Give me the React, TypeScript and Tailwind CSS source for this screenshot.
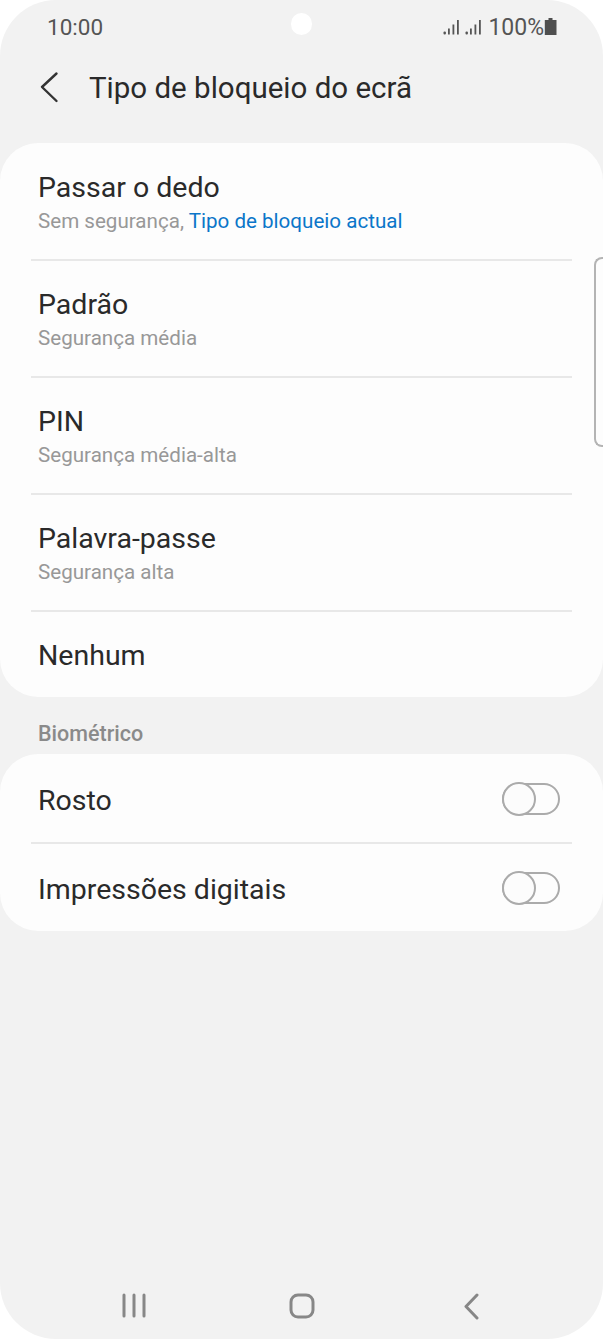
import React from "react";

function Signal() {
  return (
    <svg width="16" height="17" viewBox="0 0 16 17" fill="#555">
      <rect x="0.5" y="12.5" width="2.4" height="3" rx="1" />
      <rect x="5" y="9.5" width="1.8" height="6" />
      <rect x="9.5" y="5.5" width="1.8" height="10" />
      <rect x="14" y="1" width="1.8" height="14.5" />
    </svg>
  );
}

function Row({ title, sub, subLink, last }: { title: string; sub?: string; subLink?: string; last?: boolean }) {
  return (
    <div className={`mx-[31px] px-[7px] flex flex-col ${last ? "h-[86px] justify-center pt-[2px]" : "h-[117px] border-b-2 border-[#e8e8e8] pt-[26px]"}`}>
      <div className="text-[28.5px] leading-[36px] text-[#2a2a2a]">{title}</div>
      {sub && (
        <div className="text-[20.6px] leading-[28px] mt-[1px] text-[#989898]">
          {sub}
          {subLink && <span className="text-[#0b76c9]"> {subLink}</span>}
        </div>
      )}
    </div>
  );
}

function Toggle() {
  return (
    <div className="relative w-[58px] h-[32px] rounded-full border-2 border-[#ababab]">
      <div className="absolute left-[-2px] top-[-3px] w-[34px] h-[34px] rounded-full border-2 border-[#ababab] bg-[#fcfcfc]" />
    </div>
  );
}

function ToggleRow({ title, last }: { title: string; last?: boolean }) {
  return (
    <div className={`mx-[31px] pl-[7px] flex items-center justify-between ${last ? "h-[87px]" : "h-[90px] border-b-2 border-[#e8e8e8] pt-[2px]"}`}>
      <span className={`text-[28.5px] leading-[36px] text-[#2a2a2a] ${last ? "pt-[4px]" : "pt-[4px]"}`}>{title}</span>
      <div className="mr-[12px]">
        <Toggle />
      </div>
    </div>
  );
}

export default function App() {
  return (
    <div className="w-[603px] h-[1342px] bg-white" style={{ fontFamily: "Roboto, sans-serif" }}>
      <div className="relative w-full h-[1339px] rounded-[56px] bg-[#f2f2f2] flex flex-col overflow-hidden">
        <div className="relative h-[54px] pl-[47px] pr-[45px] pt-[1px] flex items-center justify-between text-[#555555]">
          <span className="text-[22.5px] leading-[54px] -mt-[1px]">10:00</span>
          <div className="absolute left-[291px] top-[13px] w-[21px] h-[22px] rounded-full bg-white" />
          <div className="flex items-center">
            <div className="flex items-center gap-[6px] mr-[7px]">
              <Signal />
              <Signal />
            </div>
            <span className="text-[23px] leading-[54px]">100%</span>
            <svg width="14" height="20" viewBox="0 0 14 20" fill="#4f4f4f">
              <path d="M4.5 0h4v2H12.5v15H.8V2h3.7z" />
            </svg>
          </div>
        </div>

        <div className="h-[68px] flex items-center pl-[38px] text-[#2a2a2a]">
          <svg width="24" height="34" viewBox="0 0 24 34" fill="none" stroke="#333" strokeWidth="2.4" strokeLinecap="round" strokeLinejoin="round">
            <path d="M18.5 2.5 4 16 18.5 30" />
          </svg>
          <span className="ml-[27px] text-[29.5px] leading-[40px]">Tipo de bloqueio do ecrã</span>
        </div>

        <div className="mt-[21px] bg-[#fdfdfd] rounded-[38px] h-[554px] pt-[1px]">
          <Row title="Passar o dedo" sub="Sem segurança," subLink="Tipo de bloqueio actual" />
          <Row title="Padrão" sub="Segurança média" />
          <Row title="PIN" sub="Segurança média-alta" />
          <Row title="Palavra-passe" sub="Segurança alta" />
          <Row title="Nenhum" last />
        </div>

        <div className="h-[57px] pl-[38px] pt-[24px] text-[21.5px] leading-[26px] font-medium text-[#8a8a8a]">Biométrico</div>

        <div className="bg-[#fdfdfd] rounded-[38px] h-[177px]">
          <ToggleRow title="Rosto" />
          <ToggleRow title="Impressões digitais" last />
        </div>

        <div className="absolute right-0 top-[257px] w-[9px] h-[190px] rounded-l-[8px] border-2 border-r-0 border-[#b4b4b4]" />

        <div className="mt-auto h-[69px] relative">
          <svg className="absolute left-[120px] top-[23px]" width="28" height="26" viewBox="0 0 28 26" fill="none" stroke="#878787" strokeWidth="3" strokeLinecap="round">
            <path d="M4 2v21M14 2v21M24 2v21" />
          </svg>
          <svg className="absolute left-[288px] top-[22px]" width="28" height="28" viewBox="0 0 28 28" fill="none" stroke="#878787" strokeWidth="3">
            <rect x="3" y="3" width="22" height="22" rx="7" />
          </svg>
          <svg className="absolute left-[460px] top-[22px]" width="24" height="28" viewBox="0 0 24 28" fill="none" stroke="#878787" strokeWidth="3" strokeLinecap="round" strokeLinejoin="round">
            <path d="M17 3 6 14.5 17 26" />
          </svg>
        </div>
      </div>
    </div>
  );
}
